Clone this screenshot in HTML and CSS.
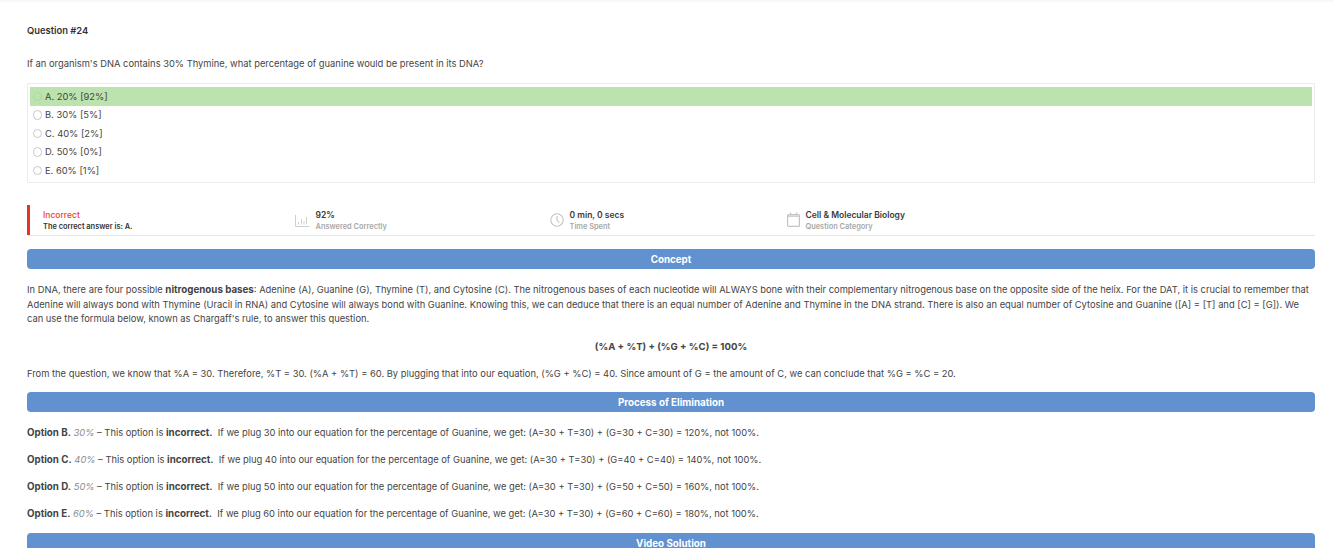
FILE: index.html
```html
<!DOCTYPE html>
<html lang="en">
<head>
<meta charset="utf-8">
<title>Question #24</title>
<link rel="stylesheet" href="styles.css">
</head>
<body>
<div class="topshade"></div>
<main class="page">
  <h1 class="qnum">Question #24</h1>
  <p class="qtext">If an organism's DNA contains 30% Thymine, what percentage of guanine would be present in its DNA?</p>
  <div class="choices">
    <div class="choice correct"><span class="radio"></span><span class="label">A. 20% [92%]</span></div>
    <div class="choice"><span class="radio"></span><span class="label">B. 30% [5%]</span></div>
    <div class="choice"><span class="radio"></span><span class="label">C. 40% [2%]</span></div>
    <div class="choice"><span class="radio"></span><span class="label">D. 50% [0%]</span></div>
    <div class="choice"><span class="radio"></span><span class="label">E. 60% [1%]</span></div>
  </div>
  <div class="stats">
    <div class="stat first">
      <div><div class="stat-main incorrect">Incorrect</div><div class="stat-sub dark">The correct answer is: A.</div></div>
    </div>
    <div class="stat">
      <svg class="icon" width="15" height="14" viewBox="0 0 15 14" fill="none" stroke="#cfcfcf" stroke-width="1"><path d="M.5 2v11.500H14.500"/><path d="M3.500 9v2.500M6.500 6v5.500M9 8v3.500M11.500 4v7.500"/></svg>
      <div><div class="stat-main">92%</div><div class="stat-sub">Answered Correctly</div></div>
    </div>
    <div class="stat">
      <svg class="icon" width="14" height="14" viewBox="0 0 14 14" fill="none" stroke="#c4c4c4" stroke-width="1.100"><circle cx="7" cy="7" r="6.200"/><path d="M7 3v4.300l2.300 2.200"/></svg>
      <div><div class="stat-main">0 min, 0 secs</div><div class="stat-sub">Time Spent</div></div>
    </div>
    <div class="stat">
      <svg class="icon" width="13" height="15" viewBox="0 0 13 15" fill="none" stroke="#c4c4c4" stroke-width="1.200"><rect x=".6" y="2.600" width="11.800" height="11.800" rx="1"/><path d="M.6 4.200h11.800M3.500 .5v2M9.500 .5v2"/></svg>
      <div><div class="stat-main">Cell &amp; Molecular Biology</div><div class="stat-sub">Question Category</div></div>
    </div>
  </div>
  <h2 class="bar concept">Concept</h2>
  <p class="para">In DNA, there are four possible <b>nitrogenous bases</b>: Adenine (A), Guanine (G), Thymine (T), and Cytosine (C). The nitrogenous bases of each nucleotide will ALWAYS bone with their complementary nitrogenous base on the opposite side of the helix. For the DAT, it is crucial to remember that Adenine will always bond with Thymine (Uracil in RNA) and Cytosine will always bond with Guanine. Knowing this, we can deduce that there is an equal number of Adenine and Thymine in the DNA strand. There is also an equal number of Cytosine and Guanine ([A] = [T] and [C] = [G]). We can use the formula below, known as Chargaff's rule, to answer this question.</p>
  <p class="formula">(%A + %T) + (%G + %C) = 100%</p>
  <p class="from">From the question, we know that %A = 30. Therefore, %T = 30. (%A + %T) = 60. By plugging that into our equation, (%G + %C) = 40. Since amount of G = the amount of C, we can conclude that %G = %C = 20.</p>
  <h2 class="bar poe">Process of Elimination</h2>
  <div class="options">
    <p><b>Option B.</b> <i>30%</i> – This option is <b>incorrect.</b>&nbsp; If we plug 30 into our equation for the percentage of Guanine, we get: (A=30 + T=30) + (G=30 + C=30) = 120%, not 100%.</p>
    <p><b>Option C.</b> <i>40%</i> – This option is <b>incorrect.</b>&nbsp; If we plug 40 into our equation for the percentage of Guanine, we get: (A=30 + T=30) + (G=40 + C=40) = 140%, not 100%.</p>
    <p><b>Option D.</b> <i>50%</i> – This option is <b>incorrect.</b>&nbsp; If we plug 50 into our equation for the percentage of Guanine, we get: (A=30 + T=30) + (G=50 + C=50) = 160%, not 100%.</p>
    <p><b>Option E.</b> <i>60%</i> – This option is <b>incorrect.</b>&nbsp; If we plug 60 into our equation for the percentage of Guanine, we get: (A=30 + T=30) + (G=60 + C=60) = 180%, not 100%.</p>
  </div>
  <h2 class="bar video">Video Solution</h2>
</main>
</body>
</html>
```
FILE: styles.css
```css
html, body {
  margin: 0;
  height: 548px;
  overflow: hidden;
  background: #fff;
}
body {
  font-family: Inter, "Liberation Sans", sans-serif;
  font-size: 9.350px;
  line-height: 14.500px;
  color: #444;
}
.topshade {
  height: 3px;
  background: linear-gradient(#f6f6f6, #fff);
}
.page {
  padding: 0 19px 0 27px;
}
p, h1, h2 {
  margin: 0;
}
b {
  font-size: 9.750px;
  font-weight: 700;
}
.qnum {
  margin-top: 21px;
  font-size: 9.400px;
  font-weight: 600;
  color: #333;
}
.qtext {
  margin-top: 18px;
}
.choices {
  margin-top: 12px;
  height: 100px;
  box-sizing: border-box;
  border: 1px solid #ececec;
  padding: 3px 2px;
}
.choice {
  display: flex;
  align-items: center;
  gap: 3px;
  height: 18.600px;
  padding-left: 2.500px;
}
.choice.correct {
  background: #bce2ae;
}
.label {
  padding-top: 1px;
}
.radio {
  width: 9.500px;
  height: 9.500px;
  box-sizing: border-box;
  border: 1px solid #c8c8c8;
  border-radius: 50%;
  background: #fff;
}
.correct .radio {
  background: transparent;
  border-color: #b3d5a6;
}
.stats {
  margin-top: 22px;
  height: 31px;
  box-sizing: border-box;
  display: grid;
  grid-template-columns: 268px 255px 237px 1fr;
  border-bottom: 1px solid #e8e8e8;
}
.stat {
  display: flex;
  align-items: center;
  gap: 5.500px;
  padding-top: 2px;
}
.stat.first {
  border-left: 3px solid #e8332a;
  padding-left: 13px;
}
.icon {
  flex: none;
  margin-top: -3px;
}
.stat-main {
  font-size: 8.500px;
  line-height: 12.500px;
  font-weight: 600;
  color: #3a3a3a;
}
.stat-sub {
  font-size: 7.400px;
  line-height: 12.500px;
  font-weight: 600;
  color: #a8a8a8;
}
.stat-sub.dark {
  color: #333;
}
.stat-main.incorrect {
  color: #ef3b32;
  font-weight: 500;
}
.bar {
  background: #6291cf;
  color: #fff;
  border-radius: 4px;
  font-size: 9.800px;
  font-weight: 700;
  text-align: center;
  height: 20.500px;
  line-height: 22px;
}
.concept {
  margin-top: 12.500px;
}
.para {
  margin-top: 14px;
}
.formula {
  margin-top: 13px;
  text-align: center;
  font-size: 9.600px;
  font-weight: 700;
}
.from {
  margin-top: 12.500px;
}
.poe {
  margin-top: 10.500px;
}
.options {
  margin-top: 13.500px;
  display: flex;
  flex-direction: column;
  gap: 12.800px;
}
.options i {
  color: #8a8a8a;
}
.video {
  margin-top: 11px;
}
```
